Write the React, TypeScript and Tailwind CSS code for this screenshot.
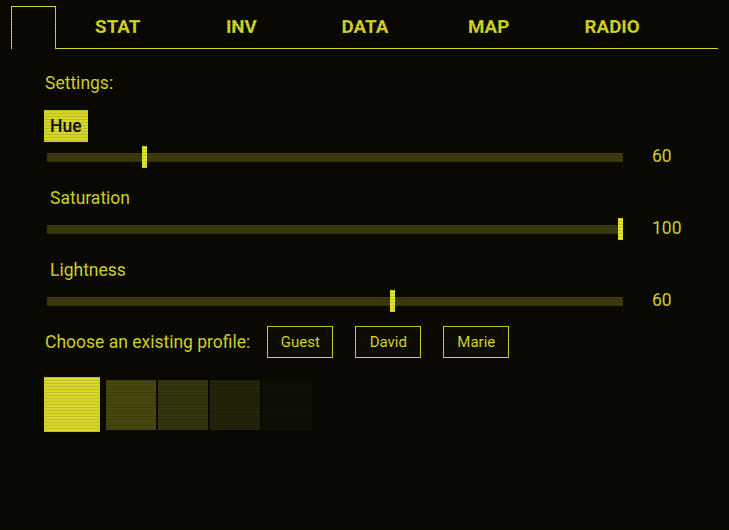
import { useState } from 'react'

const TABS = ['STAT', 'INV', 'DATA', 'MAP', 'RADIO']
const PROFILES = ['Guest', 'David', 'Marie']

const SLIDERS = [
  { key: 'hue', label: 'Hue', value: 60, max: 360 },
  { key: 'sat', label: 'Saturation', value: 100, max: 100 },
  { key: 'light', label: 'Lightness', value: 60, max: 100 },
]

// swatch shades, brightest first
const SWATCHES = ['bg-[#d9d92c]', 'bg-[#47470f]', 'bg-[#34340d]', 'bg-[#23230a]', 'bg-[#0f0f05]']

function Slider({ value, max }: { value: number; max: number }) {
  // thumb travels inside the track (576 - 5px thumb)
  const left = (value / max) * 571
  return (
    <div className="relative w-[576px] h-[9px] bg-[#3a3a0e]">
      <div className="absolute top-[-7px] w-[5px] h-[22px] bg-[#e4e42a]" style={{ left }} />
    </div>
  )
}

export default function App() {
  const [focused] = useState('hue')

  return (
    <div className="relative min-h-[530px] w-full bg-[#090902] text-[#d6d628] font-['Roboto','Liberation_Sans',sans-serif] overflow-hidden">
      {/* Tab bar */}
      <div className="flex pt-[6px] pl-[11px] pr-[11px]">
        <div className="w-[45px] h-[43px] border border-b-0 border-[#d6d628]" />
        <div className="flex flex-1 border-b border-[#d6d628]">
          {TABS.map((t) => (
            <div key={t} className="w-[123.6px] pt-[5px] text-center text-[18.8px] font-bold leading-[32px]">
              {t}
            </div>
          ))}
        </div>
      </div>

      {/* Settings */}
      <div className="pl-[44px] pt-[22px]">
        <div className="pl-px text-[17.5px] leading-[24px]">Settings:</div>

        <div className="mt-[15px] flex flex-col gap-[10px]">
          {SLIDERS.map((s) => (
            <div key={s.key}>
              <div
                className={`inline-block h-[32px] px-[6px] text-[17.5px] leading-[32px] ${
                  focused === s.key ? 'bg-[#d6d62a] text-[#0a0a03] font-medium' : ''
                }`}
              >
                {s.label}
              </div>
              <div className="flex items-center h-[30px] pl-[3px]">
                <Slider value={s.value} max={s.max} />
                <div className="ml-[29px] -mt-[2px] text-[17.5px] leading-[24px]">{s.value}</div>
              </div>
            </div>
          ))}
        </div>

        {/* Profiles */}
        <div className="mt-[10px] flex items-center">
          <div className="pl-px text-[17.5px] leading-[24px] mr-[17px]">Choose an existing profile:</div>
          <div className="flex gap-[22px]">
            {PROFILES.map((p) => (
              <button
                key={p}
                className="w-[66px] h-[32px] border border-[#d6d628] bg-[#0d0d03] text-[15px] text-[#d6d628]"
              >
                {p}
              </button>
            ))}
          </div>
        </div>

        {/* Colour swatches */}
        <div className="mt-[19px] flex items-center">
          <div className={`w-[56px] h-[55px] ${SWATCHES[0]}`} />
          <div className="ml-[6px] flex gap-[2px]">
            {SWATCHES.slice(1).map((c, i) => (
              <div key={i} className={`w-[50px] h-[50px] ${c}`} />
            ))}
          </div>
        </div>
      </div>

      {/* scanlines */}
      <div className="pointer-events-none absolute inset-0 bg-[repeating-linear-gradient(to_bottom,rgba(0,0,0,0)_0px,rgba(0,0,0,0)_2px,rgba(0,0,0,0.12)_2px,rgba(0,0,0,0.12)_3px)]" />
    </div>
  )
}
